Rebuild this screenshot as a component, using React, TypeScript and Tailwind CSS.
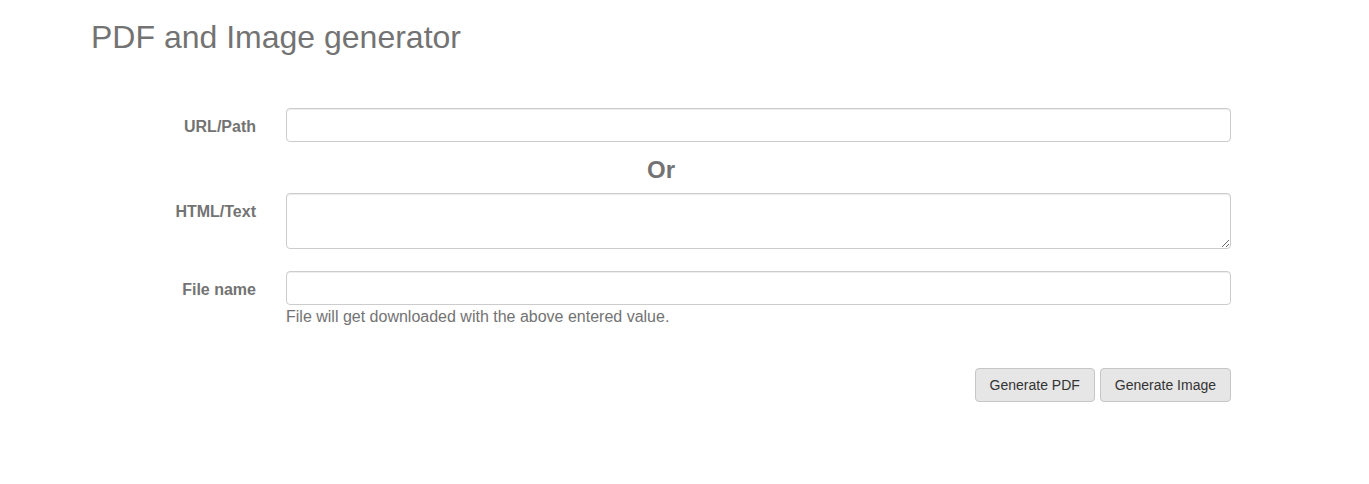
export default function App() {
  const font = { fontFamily: '"Liberation Sans", Arial, sans-serif' };
  const inputCls =
    "w-[945px] h-[34px] rounded-[4px] border border-[#cccccc] bg-white px-3 text-[14px] text-[#555] outline-none shadow-[inset_0_1px_1px_rgba(0,0,0,0.075)]";
  const labelCls = "w-[181px] shrink-0 pt-[9px] text-right text-[16px] leading-[20px] font-bold text-[#737373]";
  const btnCls =
    "h-[34px] rounded-[4px] border border-[#c6c6c6] bg-[#e6e6e6] px-[14px] text-[14px] leading-[20px] text-[#333333]";

  return (
    <div className="min-h-[484px] bg-white text-[#737373]" style={font}>
      <h1 className="pt-[20px] pl-[91px] text-[32px] leading-[35px] font-normal text-[#737373]">
        PDF and Image generator
      </h1>

      <form className="mt-[53px] w-[1170px] ml-[75px] flex flex-col">
        <div className="flex gap-[30px]">
          <label className={labelCls}>URL/Path</label>
          <input type="text" className={inputCls} />
        </div>

        <div className="mt-[15px] mb-[10px] pl-[2px] text-center text-[24px] leading-[26px] font-bold text-[#737373]">
          Or
        </div>

        <div className="flex gap-[30px]">
          <label className={labelCls}>HTML/Text</label>
          <textarea className={inputCls + " h-[56px] py-[6px] resize-y"} />
        </div>

        <div className="mt-[22px] flex gap-[30px]">
          <label className={labelCls}>File name</label>
          <div className="flex flex-col">
            <input type="text" className={inputCls} />
            <p className="mt-[1px] text-[16px] leading-[22px] text-[#737373]">
              File will get downloaded with the above entered value.
            </p>
          </div>
        </div>

        <div className="mt-[40px] w-[1156px] flex justify-end gap-[5px]">
          <button type="button" className={btnCls}>
            Generate PDF
          </button>
          <button type="button" className={btnCls}>
            Generate Image
          </button>
        </div>
      </form>
    </div>
  );
}
